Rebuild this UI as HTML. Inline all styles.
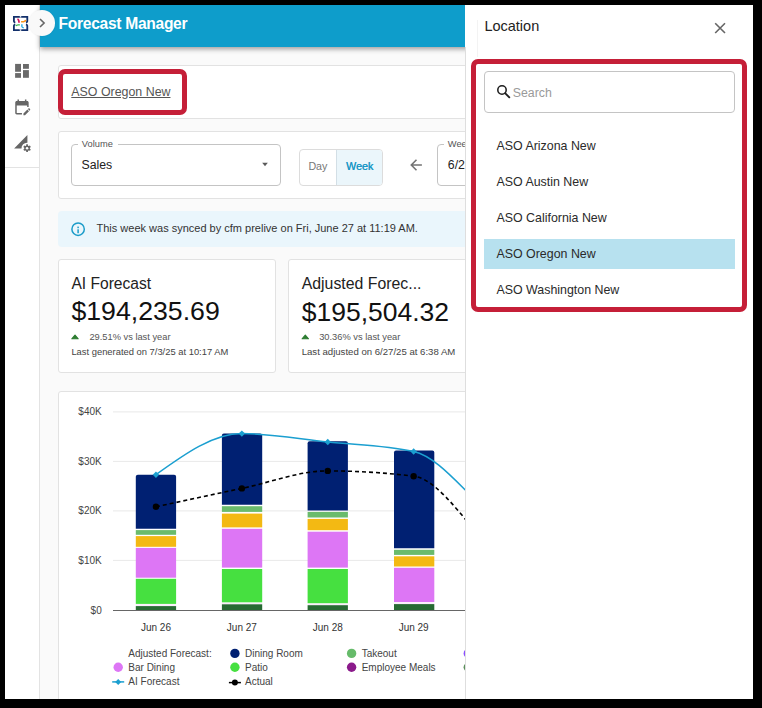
<!DOCTYPE html>
<html><head><meta charset="utf-8"><style>
html,body{margin:0;padding:0;width:762px;height:708px;overflow:hidden;background:#000;font-family:"Liberation Sans", sans-serif;}
*{box-sizing:border-box;}
.abs{position:absolute;}
.t{position:absolute;white-space:nowrap;line-height:normal;font-family:"Liberation Sans", sans-serif;}
#app{position:absolute;left:5px;top:5px;width:748px;height:694px;background:#fafafa;overflow:hidden;}
</style></head><body>
<div id="app"></div>
<!-- sidebar -->
<div class="abs" style="left:5px;top:5px;width:35px;height:694px;background:#fff;border-right:1px solid #e3e3e3;"></div>
<div class="abs" style="left:5px;top:167px;width:34px;height:1px;background:#e3e3e3;"></div>
<!-- header -->
<div class="abs" style="left:40px;top:5px;width:440px;height:42px;background:#0e9dcb;box-shadow:0 2px 5px rgba(0,0,0,0.38);"></div>
<!-- cards -->
<div class="abs" style="left:58px;top:65px;width:450px;height:54px;background:#fff;border:1px solid #e2e2e2;border-radius:3px;"></div>
<div class="abs" style="left:58px;top:131px;width:450px;height:68px;background:#fff;border:1px solid #e2e2e2;border-radius:3px;"></div>
<div class="abs" style="left:71px;top:144px;width:210px;height:42px;border:1px solid #c4c4c4;border-radius:4px;"></div>
<div class="abs" style="left:78px;top:140px;width:40px;height:8px;background:#fff;"></div>
<div class="abs" style="left:299px;top:149px;width:84px;height:37px;border:1px solid #dcdcdc;border-radius:4px;overflow:hidden;"><div class="abs" style="left:36px;top:0;width:48px;height:36px;background:#ebf6fb;border-left:1px solid #d3dfe6;"></div></div>
<div class="abs" style="left:437px;top:144px;width:210px;height:42px;border:1px solid #c4c4c4;border-radius:4px;"></div>
<div class="abs" style="left:444px;top:140px;width:40px;height:8px;background:#fff;"></div>
<svg class="abs" style="left:0;top:0" width="762" height="708">
<path d="M262.2,162.8 L267.8,162.8 L265,166.3 Z" fill="#5a5a5a"/>
<path d="M421.9,165 H411.3 M416.5,159.8 L411.3,165 L416.5,170.2" stroke="#737373" stroke-width="1.6" fill="none"/>
</svg>
<div class="abs" style="left:58px;top:211px;width:450px;height:36px;background:#eaf6fc;border-radius:4px;"></div>
<svg class="abs" style="left:0;top:0" width="762" height="708">
<circle cx="78.1" cy="229.2" r="6.2" fill="none" stroke="#1b9cc9" stroke-width="1.5"/>
<rect x="77.35" y="229.3" width="1.5" height="3.9" fill="#1b9cc9"/>
<rect x="77.35" y="226.6" width="1.5" height="1.6" fill="#1b9cc9"/>
</svg>
<div class="abs" style="left:58px;top:259px;width:218px;height:114px;background:#fff;border:1px solid #e2e2e2;border-radius:3px;"></div>
<div class="abs" style="left:288px;top:259px;width:218px;height:114px;background:#fff;border:1px solid #e2e2e2;border-radius:3px;"></div>
<svg class="abs" style="left:0;top:0" width="762" height="708">
<path d="M71.8,338.8 L75,335 L78.2,338.8 Z" fill="#2e7d32" stroke="#2e7d32" stroke-width="1.1" stroke-linejoin="round"/>
<path d="M302.1,338.8 L305.3,335 L308.5,338.8 Z" fill="#2e7d32" stroke="#2e7d32" stroke-width="1.1" stroke-linejoin="round"/>
</svg>
<div class="abs" style="left:58px;top:391px;width:450px;height:320px;background:#fff;border:1px solid #e2e2e2;border-radius:3px;"></div>
<svg class="abs" style="left:0;top:0" width="762" height="708" viewBox="0 0 762 708"><line x1="113" y1="411.9" x2="760" y2="411.9" stroke="#e9e9e9" stroke-width="1"/><line x1="113" y1="461.4" x2="760" y2="461.4" stroke="#e9e9e9" stroke-width="1"/><line x1="113" y1="510.9" x2="760" y2="510.9" stroke="#e9e9e9" stroke-width="1"/><line x1="113" y1="560.4" x2="760" y2="560.4" stroke="#e9e9e9" stroke-width="1"/><line x1="113" y1="610.5" x2="760" y2="610.5" stroke="#666" stroke-width="1"/><rect x="135.8" y="604.30" width="40.3" height="1.40" fill="#fae8fa"/><path d="M135.8,528.7 V476.7 Q135.8,474.7 137.8,474.7 H174.10000000000002 Q176.10000000000002,474.7 176.10000000000002,476.7 V528.7 Z" fill="#002072"/><rect x="135.8" y="530.1" width="40.3" height="4.70" fill="#6abb6c"/><rect x="135.8" y="536.1" width="40.3" height="10.70" fill="#f3b913"/><rect x="135.8" y="547.9" width="40.3" height="29.80" fill="#dd76f5"/><rect x="135.8" y="578.8" width="40.3" height="25.10" fill="#46e040"/><rect x="135.8" y="606.1" width="40.3" height="3.90" fill="#276a33"/><rect x="221.9" y="602.70" width="40.3" height="1.20" fill="#fae8fa"/><path d="M221.9,504.8 V435.6 Q221.9,433.6 223.9,433.6 H260.2 Q262.2,433.6 262.2,435.6 V504.8 Z" fill="#002072"/><rect x="221.9" y="506.2" width="40.3" height="5.70" fill="#6abb6c"/><rect x="221.9" y="513.6" width="40.3" height="13.80" fill="#f3b913"/><rect x="221.9" y="528.8" width="40.3" height="38.80" fill="#dd76f5"/><rect x="221.9" y="569" width="40.3" height="33.30" fill="#46e040"/><rect x="221.9" y="604.3" width="40.3" height="5.70" fill="#276a33"/><rect x="307.6" y="603.60" width="40.3" height="1.20" fill="#fae8fa"/><path d="M307.6,510.5 V443.2 Q307.6,441.2 309.6,441.2 H345.90000000000003 Q347.90000000000003,441.2 347.90000000000003,443.2 V510.5 Z" fill="#002072"/><rect x="307.6" y="511.9" width="40.3" height="5.60" fill="#6abb6c"/><rect x="307.6" y="518.9" width="40.3" height="11.30" fill="#f3b913"/><rect x="307.6" y="531.7" width="40.3" height="35.90" fill="#dd76f5"/><rect x="307.6" y="569" width="40.3" height="34.20" fill="#46e040"/><rect x="307.6" y="605.2" width="40.3" height="4.80" fill="#276a33"/><rect x="394" y="602.40" width="40.3" height="1.30" fill="#fae8fa"/><path d="M394,548.2 V452.4 Q394,450.4 396,450.4 H432.3 Q434.3,450.4 434.3,452.4 V548.2 Z" fill="#002072"/><rect x="394" y="549.8" width="40.3" height="5.10" fill="#6abb6c"/><rect x="394" y="556.3" width="40.3" height="10.20" fill="#f3b913"/><rect x="394" y="567.8" width="40.3" height="34.20" fill="#dd76f5"/><rect x="394" y="604.1" width="40.3" height="5.90" fill="#276a33"/><path d="M155.95,474.70C184.58,454.15 213.22,433.60 241.85,433.60C270.48,433.60 299.12,439.02 327.75,442.00C356.38,444.98 385.02,445.17 413.65,451.50C442.28,457.83 470.92,501.92 499.55,520.00C528.18,538.08 556.82,549.04 585.45,560.00" fill="none" stroke="#1b9fd0" stroke-width="1.5"/><path d="M155.95,506.80C184.58,500.59 213.22,494.38 241.85,488.40C270.48,482.42 299.12,470.90 327.75,470.90C356.38,470.90 385.02,472.67 413.65,476.20C442.28,479.73 470.92,533.53 499.55,555.00C528.18,576.47 556.82,590.73 585.45,605.00" fill="none" stroke="#000" stroke-width="1.6" stroke-dasharray="4 3"/><path d="M155.95,471.5 L159.14999999999998,474.7 L155.95,477.9 L152.75,474.7 Z" fill="#1b9fd0"/><circle cx="155.95" cy="506.8" r="3.2" fill="#000"/><path d="M241.85000000000002,430.40000000000003 L245.05,433.6 L241.85000000000002,436.8 L238.65000000000003,433.6 Z" fill="#1b9fd0"/><circle cx="241.85000000000002" cy="488.4" r="3.2" fill="#000"/><path d="M327.75,438.8 L330.95,442 L327.75,445.2 L324.55,442 Z" fill="#1b9fd0"/><circle cx="327.75" cy="470.9" r="3.2" fill="#000"/><path d="M413.65000000000003,448.3 L416.85,451.5 L413.65000000000003,454.7 L410.45000000000005,451.5 Z" fill="#1b9fd0"/><circle cx="413.65000000000003" cy="476.2" r="3.2" fill="#000"/><path d="M499.55,516.8 L502.75,520 L499.55,523.2 L496.35,520 Z" fill="#1b9fd0"/><circle cx="499.55" cy="555" r="3.2" fill="#000"/></svg>
<svg class="abs" style="left:0;top:0" width="762" height="708"><circle cx="234.9" cy="653.4000000000001" r="4.7" fill="#002072"/><circle cx="351.6" cy="653.4000000000001" r="4.7" fill="#66bb6a"/><circle cx="468.3" cy="653.4000000000001" r="4.7" fill="#8a4dff"/><circle cx="118.2" cy="667.3000000000001" r="4.7" fill="#dd76f5"/><circle cx="234.9" cy="667.3000000000001" r="4.7" fill="#46e040"/><circle cx="351.6" cy="667.3000000000001" r="4.7" fill="#8b1a8b"/><circle cx="468.3" cy="667.3000000000001" r="4.7" fill="#5b8f5b"/><line x1="112.2" y1="681.9000000000001" x2="124.2" y2="681.9000000000001" stroke="#1b9fd0" stroke-width="1.5"/><path d="M118.2,678.9000000000001 L121.2,681.9000000000001 L118.2,684.9000000000001 L115.2,681.9000000000001 Z" fill="#1b9fd0"/><line x1="228.9" y1="682.6000000000001" x2="240.9" y2="682.6000000000001" stroke="#000" stroke-width="1.5"/><circle cx="234.9" cy="682.6000000000001" r="3" fill="#000"/></svg>
<div class="t" style="left:58.60px;top:14.50px;font-size:15.6px;color:#fff;font-weight:bold;letter-spacing:-0.3px;">Forecast Manager</div>
<div class="t" style="left:71.30px;top:84.78px;font-size:12.4px;color:#555;font-weight:normal;text-decoration:underline;text-underline-offset:1px;">ASO Oregon New</div>
<div class="t" style="left:81.80px;top:139.08px;font-size:9.3px;color:#555;font-weight:normal;">Volume</div>
<div class="t" style="left:81.50px;top:157.87px;font-size:12.3px;color:#222;font-weight:normal;">Sales</div>
<div class="t" style="left:308.40px;top:160.32px;font-size:10.7px;color:#777;font-weight:normal;">Day</div>
<div class="t" style="left:346.00px;top:160.32px;font-size:10.7px;color:#1898c6;font-weight:normal;text-shadow:0.35px 0 0 #1898c6;">Week</div>
<div class="t" style="left:447.80px;top:139.08px;font-size:9.3px;color:#555;font-weight:normal;">Week</div>
<div class="t" style="left:447.80px;top:157.87px;font-size:12.3px;color:#222;font-weight:normal;">6/26/25 - 7/2/25</div>
<div class="t" style="left:96.50px;top:222.34px;font-size:11px;color:#333;font-weight:normal;">This week was synced by cfm prelive on Fri, June 27 at 11:19 AM.</div>
<div class="t" style="left:71.40px;top:274.88px;font-size:15.6px;color:#222;font-weight:normal;">AI Forecast</div>
<div class="t" style="left:71.40px;top:296.34px;font-size:26.7px;color:#111;font-weight:normal;">$194,235.69</div>
<div class="t" style="left:89.40px;top:331.58px;font-size:9.3px;color:#555;font-weight:normal;">29.51% vs last year</div>
<div class="t" style="left:71.40px;top:345.99px;font-size:9.4px;color:#444;font-weight:normal;">Last generated on 7/3/25 at 10:17 AM</div>
<div class="t" style="left:301.70px;top:274.66px;font-size:15.85px;color:#222;font-weight:normal;">Adjusted Forec...</div>
<div class="t" style="left:301.70px;top:296.52px;font-size:26.5px;color:#111;font-weight:normal;">$195,504.32</div>
<div class="t" style="left:319.20px;top:331.58px;font-size:9.3px;color:#555;font-weight:normal;">30.36% vs last year</div>
<div class="t" style="left:301.70px;top:345.81px;font-size:9.6px;color:#444;font-weight:normal;">Last adjusted on 6/27/25 at 6:38 AM</div>
<div class="t" style="right:660.3px;top:406.15px;font-size:10px;color:#444">$40K</div>
<div class="t" style="right:660.3px;top:455.75px;font-size:10px;color:#444">$30K</div>
<div class="t" style="right:660.3px;top:505.45px;font-size:10px;color:#444">$20K</div>
<div class="t" style="right:660.3px;top:555.15px;font-size:10px;color:#444">$10K</div>
<div class="t" style="right:660.3px;top:604.95px;font-size:10px;color:#444">$0</div>
<div class="t" style="left:115.94999999999999px;width:80px;text-align:center;top:621.95px;font-size:10px;color:#333">Jun 26</div>
<div class="t" style="left:201.85000000000002px;width:80px;text-align:center;top:621.95px;font-size:10px;color:#333">Jun 27</div>
<div class="t" style="left:287.75px;width:80px;text-align:center;top:621.95px;font-size:10px;color:#333">Jun 28</div>
<div class="t" style="left:373.65000000000003px;width:80px;text-align:center;top:621.95px;font-size:10px;color:#333">Jun 29</div>
<div class="t" style="left:459.55px;width:80px;text-align:center;top:621.95px;font-size:10px;color:#333">Jun 30</div>
<div class="t" style="left:128.30px;top:648.15px;font-size:10px;color:#444;font-weight:normal;">Adjusted Forecast:</div>
<div class="t" style="left:245.00px;top:648.15px;font-size:10px;color:#444;font-weight:normal;">Dining Room</div>
<div class="t" style="left:361.70px;top:648.15px;font-size:10px;color:#444;font-weight:normal;">Takeout</div>
<div class="t" style="left:478.40px;top:648.15px;font-size:10px;color:#444;font-weight:normal;">Delivery</div>
<div class="t" style="left:128.30px;top:662.05px;font-size:10px;color:#444;font-weight:normal;">Bar Dining</div>
<div class="t" style="left:245.00px;top:662.05px;font-size:10px;color:#444;font-weight:normal;">Patio</div>
<div class="t" style="left:361.70px;top:662.05px;font-size:10px;color:#444;font-weight:normal;">Employee Meals</div>
<div class="t" style="left:478.40px;top:662.05px;font-size:10px;color:#444;font-weight:normal;">Other</div>
<div class="t" style="left:128.30px;top:675.95px;font-size:10px;color:#444;font-weight:normal;">AI Forecast</div>
<div class="t" style="left:245.00px;top:675.95px;font-size:10px;color:#444;font-weight:normal;">Actual</div>

<!-- red highlight on left -->
<div class="abs" style="left:58px;top:69px;width:129px;height:46px;border:5px solid #c51f38;border-radius:7px;"></div>
<!-- toggle circle -->
<div class="abs" style="left:29.2px;top:10px;width:25.5px;height:25.5px;border-radius:50%;background:#f9f9f9;box-shadow:0 0 2px rgba(0,0,0,0.08);"></div>
<svg class="abs" style="left:0;top:0" width="762" height="708">
<path d="M40,19 L44.1,23 L40,27" stroke="#666" stroke-width="1.6" fill="none"/>
</svg>
<!-- logo -->
<svg class="abs" style="left:11px;top:14px" width="20" height="19" viewBox="0 0 745 708">
<g fill="none" stroke="#13306b" stroke-width="68" stroke-linecap="butt">
<path d="M325,135 Q318,108 285,108 H108 V270 Q108,300 160,318"/>
<path d="M385,135 Q392,108 425,108 H607 V270 Q607,300 560,318"/>
<path d="M325,575 Q318,598 285,598 H108 V440 Q108,405 160,385"/>
<path d="M385,575 Q392,598 425,598 H607 V440 Q607,405 560,385"/>
</g>
<path d="M240,185 Q300,205 300,325" stroke="#d4145a" stroke-width="62" fill="none"/>
<path d="M375,290 H470 Q540,280 545,220" stroke="#f7941d" stroke-width="58" fill="none"/>
<path d="M330,405 H265 Q200,410 190,445" stroke="#39b54a" stroke-width="50" fill="none"/>
<path d="M405,380 V465 Q410,505 475,510" stroke="#29abe2" stroke-width="52" fill="none"/>
</svg>
<!-- sidebar icons -->
<svg class="abs" style="left:0;top:0" width="40" height="90"><g fill="#6a6a6a">
<rect x="15.1" y="63.9" width="5.9" height="7.9"/><rect x="23" y="64" width="5.9" height="4.8"/>
<rect x="15.1" y="73.1" width="5.9" height="4.7"/><rect x="23" y="70.1" width="5.9" height="7.7"/></g></svg>
<svg class="abs" style="left:12.86px;top:97.7px" width="17.9" height="17.9" viewBox="0 0 24 24"><path fill="#666" d="M5,10h14v2h2V6c0-1.1-0.9-2-2-2h-1V2h-2v2H8V2H6v2H5C3.89,4,3.01,4.9,3.01,6L3,20c0,1.1,0.89,2,2,2h7v-2H5V10z M22.84,16.28l-0.71,0.71l-2.12-2.12l0.71-0.71c0.39-0.39,1.02-0.39,1.41,0l0.71,0.71C23.23,15.26,23.23,15.89,22.84,16.28z M19.3,15.58l2.12,2.12l-5.3,5.3H14v-2.12L19.3,15.58z"/></svg>
<svg class="abs" style="left:10px;top:130px" width="26" height="26" viewBox="0 0 708 708">
<path d="M112,505 L474,138 L474,345 A152,152 0 0 0 313,505 Z" fill="#666"/>
<g transform="translate(465,495)" fill="#666">
<circle r="74"/>
<rect x="-24" y="-104" width="48" height="208" rx="6"/>
<rect x="-24" y="-104" width="48" height="208" rx="6" transform="rotate(60)"/>
<rect x="-24" y="-104" width="48" height="208" rx="6" transform="rotate(120)"/>
<circle r="34" fill="#fff"/>
</g>
</svg>
<!-- drawer -->
<div class="abs" style="left:465px;top:5px;width:288px;height:694px;background:#fff;"></div>
<div class="abs" style="left:465px;top:47px;width:1px;height:652px;background:#dedede;"></div>
<svg class="abs" style="left:0;top:0" width="762" height="708">
<path d="M715.2,23.2 L725,33 M725,23.2 L715.2,33" stroke="#666" stroke-width="1.6"/>
</svg>
<div class="abs" style="left:484px;top:71px;width:251px;height:42px;border:1px solid #c4c4c4;border-radius:4px;"></div>
<svg class="abs" style="left:0;top:0" width="762" height="708">
<circle cx="502" cy="90" r="4.2" fill="none" stroke="#1e1e1e" stroke-width="1.55"/>
<path d="M505.3,93.3 L509.3,97.3" stroke="#1e1e1e" stroke-width="1.9" stroke-linecap="round"/>
</svg>
<div class="abs" style="left:484.1px;top:239.2px;width:250.5px;height:29.5px;background:#b7e1ef;"></div>
<div class="t" style="left:484.40px;top:17.88px;font-size:14.5px;color:#222;font-weight:normal;">Location</div>
<div class="t" style="left:512.80px;top:85.77px;font-size:12.3px;color:#9a9a9a;font-weight:normal;">Search</div>
<div class="t" style="left:496.50px;top:138.68px;font-size:12.4px;color:#2a2a2a;font-weight:normal;">ASO Arizona New</div>
<div class="t" style="left:496.50px;top:174.68px;font-size:12.4px;color:#2a2a2a;font-weight:normal;">ASO Austin New</div>
<div class="t" style="left:496.50px;top:210.68px;font-size:12.4px;color:#2a2a2a;font-weight:normal;">ASO California New</div>
<div class="t" style="left:496.50px;top:246.68px;font-size:12.4px;color:#2a2a2a;font-weight:normal;">ASO Oregon New</div>
<div class="t" style="left:496.50px;top:282.68px;font-size:12.4px;color:#2a2a2a;font-weight:normal;">ASO Washington New</div>

<div class="abs" style="left:477px;top:20px;width:1px;height:37px;background:#f3f3f3;"></div>
<div class="abs" style="left:471px;top:59px;width:276px;height:253px;border:5px solid #c51f38;border-radius:7px;"></div>
<!-- black frame -->
<div class="abs" style="left:0;top:0;width:762px;height:5px;background:#000"></div>
<div class="abs" style="left:0;top:0;width:5px;height:708px;background:#000"></div>
<div class="abs" style="left:753px;top:0;width:9px;height:708px;background:#000"></div>
<div class="abs" style="left:0;top:699px;width:762px;height:9px;background:#000"></div>
</body></html>
